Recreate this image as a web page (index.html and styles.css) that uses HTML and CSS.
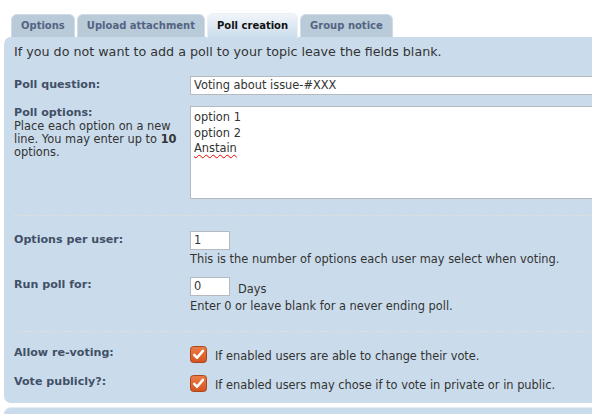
FILE: index.html
```html
<!DOCTYPE html>
<html>
<head>
<meta charset="utf-8">
<link rel="stylesheet" href="styles.css">
</head>
<body>
<div class="page">
  <ul class="tabs">
    <li class="tab">Options</li>
    <li class="tab">Upload attachment</li>
    <li class="tab active">Poll creation</li>
    <li class="tab">Group notice</li>
  </ul>
  <div class="panel">
    <p class="intro">If you do not want to add a poll to your topic leave the fields blank.</p>
    <div class="section">
      <div class="row row-question">
        <div class="label"><span class="title">Poll question:</span></div>
        <div class="field"><div class="input wide">Voting about issue-#XXX</div></div>
      </div>
      <div class="row row-options">
        <div class="label"><span class="title">Poll options:</span><span class="explain">Place each option on a new line. You may enter up to <b>10</b> options.</span></div>
        <div class="field"><div class="textarea">option 1<br>option 2<br><span class="misspelled">Anstain</span></div></div>
      </div>
    </div>
    <hr class="dashed">
    <div class="section">
      <div class="row row-per-user">
        <div class="label"><span class="title">Options per user:</span></div>
        <div class="field"><div class="input small">1</div><div class="help">This is the number of options each user may select when voting.</div></div>
      </div>
      <div class="row row-length">
        <div class="label"><span class="title">Run poll for:</span></div>
        <div class="field"><div class="inline"><div class="input small">0</div><span class="unit">Days</span></div><div class="help">Enter 0 or leave blank for a never ending poll.</div></div>
      </div>
    </div>
    <hr class="dashed dashed-2">
    <div class="section">
      <div class="row row-check">
        <div class="label"><span class="title">Allow re-voting:</span></div>
        <div class="field check-field">
          <svg class="checkbox" width="17" height="17" viewBox="0 0 17 17"><defs><linearGradient id="cg" x1="0" y1="0" x2="0" y2="1"><stop offset="0" stop-color="#ec7d46"/><stop offset="1" stop-color="#d4541f"/></linearGradient></defs><rect x="0.5" y="0.5" width="16" height="16" rx="3" fill="url(#cg)" stroke="#a9461c"/><path d="M4.2 8.8 L7.1 11.8 L12.9 4.9" fill="none" stroke="#fff" stroke-width="2.5" stroke-linecap="round" stroke-linejoin="round"/></svg>
          <span class="help">If enabled users are able to change their vote.</span>
        </div>
      </div>
      <div class="row row-check">
        <div class="label"><span class="title">Vote publicly?:</span></div>
        <div class="field check-field">
          <svg class="checkbox" width="17" height="17" viewBox="0 0 17 17"><rect x="0.5" y="0.5" width="16" height="16" rx="3" fill="url(#cg)" stroke="#a9461c"/><path d="M4.2 8.8 L7.1 11.8 L12.9 4.9" fill="none" stroke="#fff" stroke-width="2.5" stroke-linecap="round" stroke-linejoin="round"/></svg>
          <span class="help">If enabled users may chose if to vote in private or in public.</span>
        </div>
      </div>
    </div>
  </div>
  <div class="panel next"></div>
</div>
</body>
</html>
```
FILE: styles.css
```css
html, body {
  margin: 0;
  padding: 0;
  overflow: hidden;
  background: #ffffff;
}
body {
  font-family: "DejaVu Sans", Verdana, sans-serif;
  color: #333333;
  font-size: 11.4px;
}
.page {
  padding-left: 4px;
  width: 640px;
}
.tabs {
  list-style: none;
  margin: 0;
  padding: 13px 0 0 7px;
  display: flex;
  align-items: flex-end;
  gap: 2px;
}
.tab {
  height: 23px;
  line-height: 22px;
  padding: 0 9px;
  background: #b9cad9;
  border-radius: 6px 6px 0 0;
  font-weight: bold;
  font-size: 10px;
  color: #536482;
  border: 1px solid #cfdbe6;
  border-bottom: none;
  box-sizing: border-box;
}
.tab.active {
  height: 25px;
  line-height: 24px;
  background: linear-gradient(#f1f5f9, #cadceb);
  color: #111;
  border-color: #e9f0f6;
  margin-bottom: -1px;
  position: relative;
}
.panel {
  background: #cadceb;
  border-radius: 7px 0 0 7px;
  padding: 6px 0 10px 10px;
}
.intro {
  margin: 0;
  font-size: 12.7px;
  line-height: 18px;
  color: #333;
}
.row {
  display: flex;
}
.label {
  width: 176px;
  flex: none;
  display: flex;
  flex-direction: column;
}
.title {
  font-weight: bold;
  color: #425067;
  font-size: 11.1px;
  line-height: 15px;
}
.explain {
  font-size: 11.4px;
  line-height: 13px;
}
.explain b { color: #333; }
.field {
  flex: 1;
}
.input, .textarea {
  background: #fff;
  border: 1px solid #b4bac0;
  box-sizing: border-box;
  font-size: 11.4px;
  color: #333;
  padding: 0 3px;
}
.input {
  height: 19px;
  line-height: 17px;
}
.input.wide { width: 440px; }
.input.small { width: 40px; }
.textarea {
  width: 440px;
  height: 93px;
  padding-top: 3px;
  line-height: 15.5px;
}
.misspelled {
  text-decoration: underline wavy #e00;
  text-decoration-thickness: 1px;
  text-underline-offset: 2px;
}
.help {
  font-size: 11.4px;
  line-height: 15px;
  margin-top: 2px;
}
.row-question { margin-top: 15px; }
.row-question .title { margin-top: 1px; }
.row-options { margin-top: 11px; }
.row-options .title { line-height: 14px; margin-top: 0; }
.dashed {
  border: none;
  border-top: 1px dashed #e2dfd6;
  margin: 16px 0 0 0;
  height: 0;
}
.dashed-2 { margin-top: 17px; }
.row-per-user { margin-top: 15px; }
.row-per-user .title { margin-top: 1px; }
.row-length { margin-top: 10px; }
.inline { display: flex; align-items: flex-start; }
.unit { margin-left: 8px; margin-top: 5px; line-height: 15px; }
.row-check { margin-top: 13px; }
.row-check + .row-check { margin-top: 10px; }
.check-field { display: flex; align-items: flex-start; gap: 8px; }
.check-field .help { margin-top: 4px; }
.checkbox { flex: none; margin-top: 1px; }
.panel.next {
  margin-top: 4px;
  height: 20px;
  border-top: 1px solid #e4ecf3;
  border-radius: 7px 0 0 0;
  padding: 0;
}
```
